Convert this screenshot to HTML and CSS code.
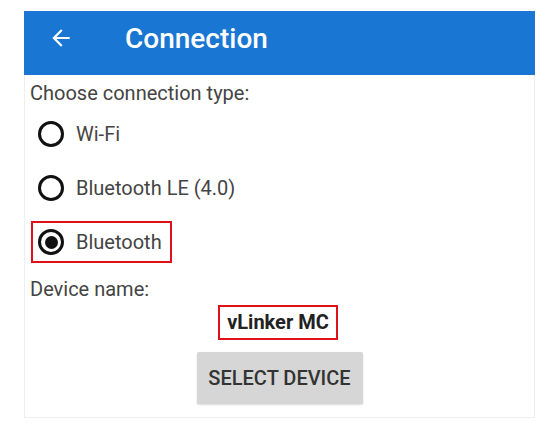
FILE: index.html
```html
<!DOCTYPE html>
<html lang="en">
<head>
    <meta charset="UTF-8">
    <meta name="viewport" content="width=device-width, initial-scale=1.0">
    <title>Connection</title>
    <link rel="stylesheet" href="styles.css">
</head>
<body>
    <div class="screen">
        <div class="app-bar">
            <svg class="back-icon" viewBox="0 0 24 24" width="24" height="24">
                <path d="M20 11H7.83l5.59-5.59L12 4l-8 8 8 8 1.41-1.41L7.83 13H20v-2z" fill="#fff"/>
            </svg>
            <h1 class="app-title">Connection</h1>
        </div>

        <div class="content">
            <p class="label">Choose connection type:</p>

            <div class="radio-group">
                <div class="radio-row">
                    <span class="radio"></span>
                    <span class="radio-text">Wi-Fi</span>
                </div>
                <div class="radio-row">
                    <span class="radio"></span>
                    <span class="radio-text">Bluetooth LE (4.0)</span>
                </div>
                <div class="radio-row highlight">
                    <span class="radio checked"></span>
                    <span class="radio-text">Bluetooth</span>
                </div>
            </div>

            <p class="label device-label">Device name:</p>

            <div class="device-name">
                <span class="highlight">vLinker MC</span>
            </div>

            <div class="actions">
                <button class="select-button">SELECT DEVICE</button>
            </div>
        </div>
    </div>
</body>
</html>
```

FILE: styles.css
```css
body {
    font-family: Roboto, 'Liberation Sans', sans-serif;
    margin: 0;
    padding: 0;
    background-color: #fff;
    color: #444;
}
.screen {
    width: 509px;
    height: 406px;
    margin: 11px 0 0 24px;
    border: 1px solid #eeeeee;
    border-top: none;
    background-color: #fff;
}
.app-bar {
    display: flex;
    align-items: center;
    box-sizing: border-box;
    height: 64px;
    padding-bottom: 10px;
    background-color: #1976d2;
    color: #fff;
    margin: 0 -1px;
}
.back-icon {
    width: 26px;
    height: 26px;
    margin-left: 24px;
}
.app-title {
    font-size: 28px;
    font-weight: 500;
    margin: 0 0 0 51px;
}
.content {
    padding: 0 6px;
}
.label {
    font-size: 20px;
    margin: 8px 0 0 -1px;
    line-height: 20px;
}
.radio-group {
    display: flex;
    flex-direction: column;
    margin-top: 10px;
}
.radio-row {
    display: flex;
    align-items: center;
    height: 42px;
    margin-bottom: 12px;
    padding-left: 7px;
}
.radio-row.highlight {
    align-self: flex-start;
    padding-left: 5px;
    padding-right: 8px;
    margin-bottom: 0;
}
.radio {
    box-sizing: border-box;
    width: 26px;
    height: 26px;
    border: 3px solid #111;
    border-radius: 50%;
    margin-right: 12px;
    display: flex;
    align-items: center;
    justify-content: center;
}
.radio.checked::after {
    content: '';
    width: 13px;
    height: 13px;
    border-radius: 50%;
    background-color: #111;
}
.radio-text {
    font-size: 20px;
}
.highlight {
    border: 2px solid #e0101a;
    box-sizing: border-box;
}
.device-label {
    margin-top: 16px;
}
.device-name {
    display: flex;
    justify-content: center;
    margin-top: 6px;
}
.device-name .highlight {
    font-size: 20px;
    line-height: 21px;
    font-weight: 700;
    color: #222;
    padding: 5px 7px;
    margin-right: 3px;
}
.actions {
    display: flex;
    justify-content: center;
    margin-top: 12px;
}
.select-button {
    font-family: Roboto, 'Liberation Sans', sans-serif;
    width: 166px;
    height: 52px;
    padding: 0;
    border: none;
    border-radius: 2px;
    background-color: #d6d6d6;
    color: #333;
    font-size: 20px;
    font-weight: 500;
    box-shadow: 0 1px 2px rgba(0, 0, 0, 0.15);
}
```
